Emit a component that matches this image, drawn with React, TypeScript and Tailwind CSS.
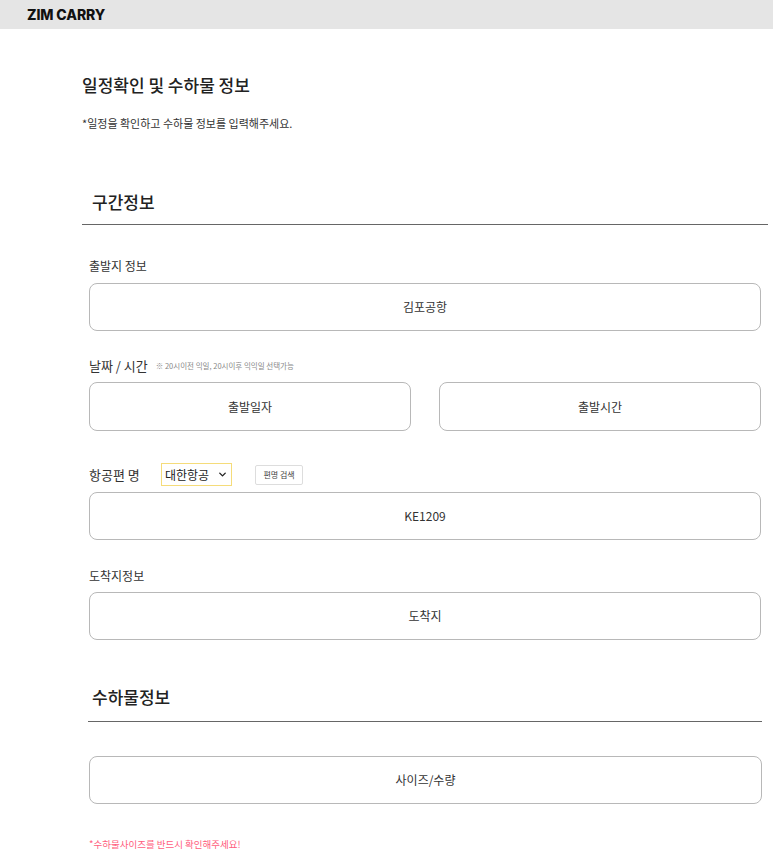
import { ChevronDown } from 'lucide-react';

const font = { fontFamily: '"Noto Sans CJK KR", "Noto Sans", sans-serif' };

function Field({ text, className = '' }: { text: string; className?: string }) {
  return (
    <div
      className={`flex h-[48px] items-center justify-center rounded-[8px] border border-[#b8b8b8] bg-white text-[12px] text-[#333] ${className}`}
    >
      {text}
    </div>
  );
}

export default function App() {
  return (
    <div className="min-h-screen bg-white text-[#222]" style={font}>
      <div className="flex h-[29px] items-center bg-[#e5e5e5] px-[27px]">
        <span className="text-[14px] font-extrabold tracking-[-0.1px] text-[#111]" style={{ fontFamily: 'Inter, "Noto Sans", sans-serif' }}>
          ZIM CARRY
        </span>
      </div>

      <div className="ml-[82px] w-[686px] pb-[10px]">
        <h1 className="mt-[44px] text-[17px] font-medium leading-[24px] text-[#222]">일정확인 및 수하물 정보</h1>
        <p className="mt-[18px] text-[11px] leading-[16px] text-[#333]">*일정을 확인하고 수하물 정보를 입력해주세요.</p>

        <h2 className="mt-[59px] pl-[10px] text-[17px] font-medium leading-[24px] text-[#222]">구간정보</h2>
        <div className="mt-[10px] h-px bg-[#666]" />

        <div className="px-[7px]">
          <div className="mt-[32px] text-[12px] leading-[18px] text-[#333]">출발지 정보</div>
          <Field text="김포공항" className="mt-[8px]" />

          <div className="mt-[26px] flex items-center gap-[8px] leading-[18px]">
            <span className="text-[13px] text-[#333]">날짜 / 시간</span>
            <span className="text-[7.5px] text-[#888]">※ 20시이전 익일, 20시이후 익익일 선택가능</span>
          </div>
          <div className="mt-[7px] grid grid-cols-2 gap-[28px]">
            <Field text="출발일자" className="h-[49px]" />
            <Field text="출발시간" className="h-[49px] text-[11px]" />
          </div>

          <div className="mt-[32px] flex h-[23px] items-center">
            <span className="w-[72px] text-[13px] text-[#333]">항공편 명</span>
            <div className="flex h-[23px] w-[71px] items-center justify-between border border-[#f5dc7a] px-[3px] text-[12px] text-[#222]">
              <span>대한항공</span>
              <ChevronDown size={11} strokeWidth={3} />
            </div>
            <button className="ml-[23px] flex h-[20px] w-[48px] items-center justify-center rounded-[2px] border border-[#ddd] bg-white text-[8px] text-[#444]">
              편명 검색
            </button>
          </div>
          <Field text="KE1209" className="mt-[6px]" />

          <div className="mt-[27px] text-[12px] leading-[18px] text-[#333]">도착지정보</div>
          <Field text="도착지" className="mt-[7px] text-[11px]" />
        </div>

        <div className="w-[680px] pl-[6px]">
          <h2 className="mt-[45px] pl-[4px] text-[17px] font-medium leading-[24px] text-[#222]">수하물정보</h2>
          <div className="mt-[12px] h-px bg-[#666]" />
          <div className="pl-px">
            <Field text="사이즈/수량" className="mt-[34px] text-[11px]" />
          </div>
        </div>

        <p className="mt-[34px] pl-[7px] text-[9.5px] leading-[12px] text-[#ff5c7c]">*수하물사이즈를 반드시 확인해주세요!</p>
      </div>
    </div>
  );
}
